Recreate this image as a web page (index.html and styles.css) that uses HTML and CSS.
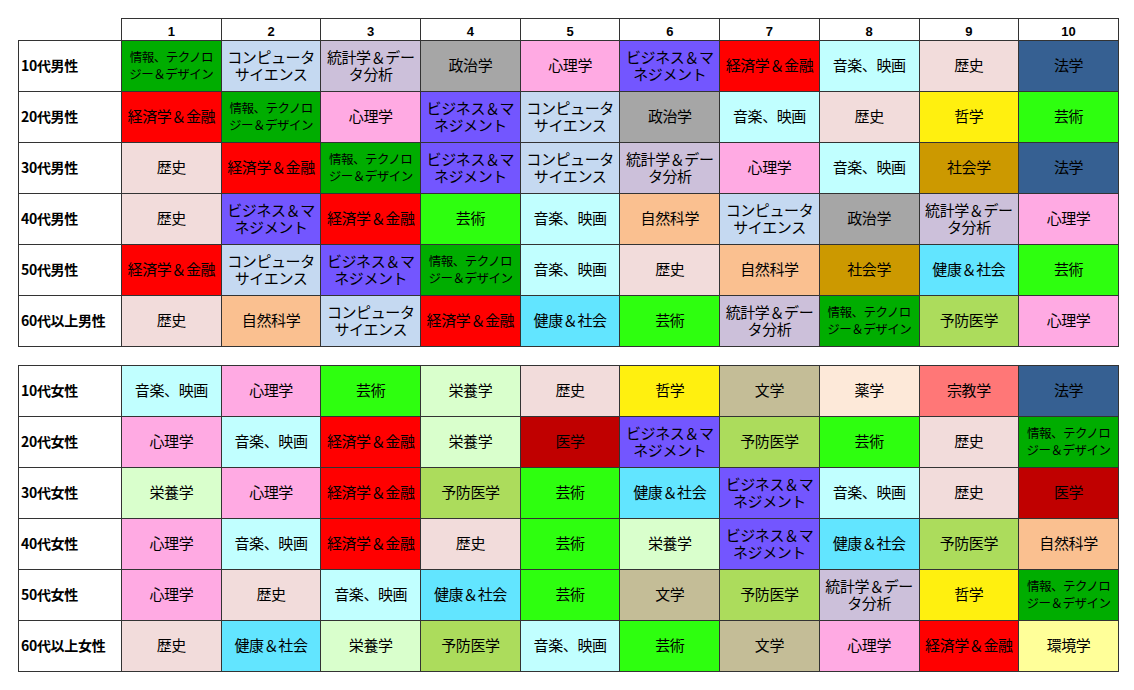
FILE: index.html
```html
<!DOCTYPE html>
<html lang="ja">
<head>
<meta charset="utf-8">
<title>年代別・性別 興味分野ランキング</title>
<link rel="stylesheet" href="styles.css">
</head>
<body>
<div class="page">
<table class="rank">
  <colgroup><col class="lab"><col span="10" class="dat"></colgroup>
  <tr class="head">
    <th class="corner"></th><th>1</th><th>2</th><th>3</th><th>4</th><th>5</th><th>6</th><th>7</th><th>8</th><th>9</th><th>10</th>
  </tr>
  <tr>
    <th class="rl">10代男性</th>
    <td class="c-info sm"><span class="ln">情報、テクノロ</span><span class="ln">ジー＆デザイン</span></td><td class="c-cs"><span class="ln">コンピュータ</span><span class="ln">サイエンス</span></td><td class="c-stat"><span class="ln">統計学＆デー</span><span class="ln">タ分析</span></td><td class="c-pol">政治学</td><td class="c-psy">心理学</td><td class="c-biz"><span class="ln">ビジネス＆マ</span><span class="ln">ネジメント</span></td><td class="c-eco">経済学＆金融</td><td class="c-mus">音楽、映画</td><td class="c-his">歴史</td><td class="c-law">法学</td>
  </tr>
  <tr>
    <th class="rl">20代男性</th>
    <td class="c-eco">経済学＆金融</td><td class="c-info sm"><span class="ln">情報、テクノロ</span><span class="ln">ジー＆デザイン</span></td><td class="c-psy">心理学</td><td class="c-biz"><span class="ln">ビジネス＆マ</span><span class="ln">ネジメント</span></td><td class="c-cs"><span class="ln">コンピュータ</span><span class="ln">サイエンス</span></td><td class="c-pol">政治学</td><td class="c-mus">音楽、映画</td><td class="c-his">歴史</td><td class="c-phi">哲学</td><td class="c-art">芸術</td>
  </tr>
  <tr>
    <th class="rl">30代男性</th>
    <td class="c-his">歴史</td><td class="c-eco">経済学＆金融</td><td class="c-info sm"><span class="ln">情報、テクノロ</span><span class="ln">ジー＆デザイン</span></td><td class="c-biz"><span class="ln">ビジネス＆マ</span><span class="ln">ネジメント</span></td><td class="c-cs"><span class="ln">コンピュータ</span><span class="ln">サイエンス</span></td><td class="c-stat"><span class="ln">統計学＆デー</span><span class="ln">タ分析</span></td><td class="c-psy">心理学</td><td class="c-mus">音楽、映画</td><td class="c-soc">社会学</td><td class="c-law">法学</td>
  </tr>
  <tr>
    <th class="rl">40代男性</th>
    <td class="c-his">歴史</td><td class="c-biz"><span class="ln">ビジネス＆マ</span><span class="ln">ネジメント</span></td><td class="c-eco">経済学＆金融</td><td class="c-art">芸術</td><td class="c-mus">音楽、映画</td><td class="c-nat">自然科学</td><td class="c-cs"><span class="ln">コンピュータ</span><span class="ln">サイエンス</span></td><td class="c-pol">政治学</td><td class="c-stat"><span class="ln">統計学＆デー</span><span class="ln">タ分析</span></td><td class="c-psy">心理学</td>
  </tr>
  <tr>
    <th class="rl">50代男性</th>
    <td class="c-eco">経済学＆金融</td><td class="c-cs"><span class="ln">コンピュータ</span><span class="ln">サイエンス</span></td><td class="c-biz"><span class="ln">ビジネス＆マ</span><span class="ln">ネジメント</span></td><td class="c-info sm"><span class="ln">情報、テクノロ</span><span class="ln">ジー＆デザイン</span></td><td class="c-mus">音楽、映画</td><td class="c-his">歴史</td><td class="c-nat">自然科学</td><td class="c-soc">社会学</td><td class="c-hea">健康＆社会</td><td class="c-art">芸術</td>
  </tr>
  <tr>
    <th class="rl">60代以上男性</th>
    <td class="c-his">歴史</td><td class="c-nat">自然科学</td><td class="c-cs"><span class="ln">コンピュータ</span><span class="ln">サイエンス</span></td><td class="c-eco">経済学＆金融</td><td class="c-hea">健康＆社会</td><td class="c-art">芸術</td><td class="c-stat"><span class="ln">統計学＆デー</span><span class="ln">タ分析</span></td><td class="c-info sm"><span class="ln">情報、テクノロ</span><span class="ln">ジー＆デザイン</span></td><td class="c-pre">予防医学</td><td class="c-psy">心理学</td>
  </tr>
</table>

<table class="rank second">
  <colgroup><col class="lab"><col span="10" class="dat"></colgroup>
  <tr>
    <th class="rl">10代女性</th>
    <td class="c-mus">音楽、映画</td><td class="c-psy">心理学</td><td class="c-art">芸術</td><td class="c-nut">栄養学</td><td class="c-his">歴史</td><td class="c-phi">哲学</td><td class="c-lit">文学</td><td class="c-pha">薬学</td><td class="c-rel">宗教学</td><td class="c-law">法学</td>
  </tr>
  <tr>
    <th class="rl">20代女性</th>
    <td class="c-psy">心理学</td><td class="c-mus">音楽、映画</td><td class="c-eco">経済学＆金融</td><td class="c-nut">栄養学</td><td class="c-med">医学</td><td class="c-biz"><span class="ln">ビジネス＆マ</span><span class="ln">ネジメント</span></td><td class="c-pre">予防医学</td><td class="c-art">芸術</td><td class="c-his">歴史</td><td class="c-info sm"><span class="ln">情報、テクノロ</span><span class="ln">ジー＆デザイン</span></td>
  </tr>
  <tr>
    <th class="rl">30代女性</th>
    <td class="c-nut">栄養学</td><td class="c-psy">心理学</td><td class="c-eco">経済学＆金融</td><td class="c-pre">予防医学</td><td class="c-art">芸術</td><td class="c-hea">健康＆社会</td><td class="c-biz"><span class="ln">ビジネス＆マ</span><span class="ln">ネジメント</span></td><td class="c-mus">音楽、映画</td><td class="c-his">歴史</td><td class="c-med">医学</td>
  </tr>
  <tr>
    <th class="rl">40代女性</th>
    <td class="c-psy">心理学</td><td class="c-mus">音楽、映画</td><td class="c-eco">経済学＆金融</td><td class="c-his">歴史</td><td class="c-art">芸術</td><td class="c-nut">栄養学</td><td class="c-biz"><span class="ln">ビジネス＆マ</span><span class="ln">ネジメント</span></td><td class="c-hea">健康＆社会</td><td class="c-pre">予防医学</td><td class="c-nat">自然科学</td>
  </tr>
  <tr>
    <th class="rl">50代女性</th>
    <td class="c-psy">心理学</td><td class="c-his">歴史</td><td class="c-mus">音楽、映画</td><td class="c-hea">健康＆社会</td><td class="c-art">芸術</td><td class="c-lit">文学</td><td class="c-pre">予防医学</td><td class="c-stat"><span class="ln">統計学＆デー</span><span class="ln">タ分析</span></td><td class="c-phi">哲学</td><td class="c-info sm"><span class="ln">情報、テクノロ</span><span class="ln">ジー＆デザイン</span></td>
  </tr>
  <tr>
    <th class="rl">60代以上女性</th>
    <td class="c-his">歴史</td><td class="c-hea">健康＆社会</td><td class="c-nut">栄養学</td><td class="c-pre">予防医学</td><td class="c-mus">音楽、映画</td><td class="c-art">芸術</td><td class="c-lit">文学</td><td class="c-psy">心理学</td><td class="c-eco">経済学＆金融</td><td class="c-env">環境学</td>
  </tr>
</table>
</div>
</body>
</html>
```

FILE: styles.css
```css
html, body {
  margin: 0;
  padding: 0;
  background: #ffffff;
}

.page {
  padding: 18px 0 0 18px;
  font-family: "Noto Sans CJK JP", "Liberation Sans", sans-serif;
  color: #000;
}

.rank {
  border-collapse: collapse;
  table-layout: fixed;
  width: 1100px;
}

.rank.second {
  margin-top: 18px;
}

.rank col.lab { width: 103px; }
.rank col.dat { width: 99.7px; }

.rank th,
.rank td {
  border: 1px solid #333;
  padding: 0 0 3px 0;
  text-align: center;
  vertical-align: middle;
  overflow: hidden;
  white-space: nowrap;
}

.rank tr { height: 51px; }
.rank tr.head { height: 22px; }

.rank tr.head th {
  font-family: "Liberation Sans", Arial, sans-serif;
  font-weight: bold;
  font-size: 13px;
  line-height: 14px;
  padding: 4px 0 0 0;
  background: #fff;
}

.rank tr.head th.corner {
  border: none;
}

.rank th.rl {
  text-align: left;
  font-weight: bold;
  font-size: 14px;
  padding-left: 2px;
  background: #fff;
  letter-spacing: -0.3px;
}

.rank td {
  font-size: 15px;
  line-height: 17px;
  letter-spacing: -0.4px;
}

.rank td .ln {
  display: block;
  height: 17px;
  line-height: 17px;
}

.rank td.sm {
  font-size: 12.5px;
  letter-spacing: -0.5px;
}

.c-info { background: #00ad00; }
.c-cs   { background: #c5d9f1; }
.c-stat { background: #ccc0da; }
.c-pol  { background: #a6a6a6; }
.c-psy  { background: #ffaae3; }
.c-biz  { background: #7356ff; }
.c-eco  { background: #ff0000; }
.c-mus  { background: #c1ffff; }
.c-his  { background: #f2dcdb; }
.c-law  { background: #366092; }
.c-phi  { background: #fff00f; }
.c-art  { background: #2eff0f; }
.c-soc  { background: #cc9900; }
.c-nat  { background: #fac090; }
.c-hea  { background: #62e5ff; }
.c-pre  { background: #acdc5c; }
.c-nut  { background: #d9ffcc; }
.c-lit  { background: #c4bd97; }
.c-pha  { background: #fde9d9; }
.c-rel  { background: #ff7777; }
.c-med  { background: #c00000; }
.c-env  { background: #ffff99; }
```
